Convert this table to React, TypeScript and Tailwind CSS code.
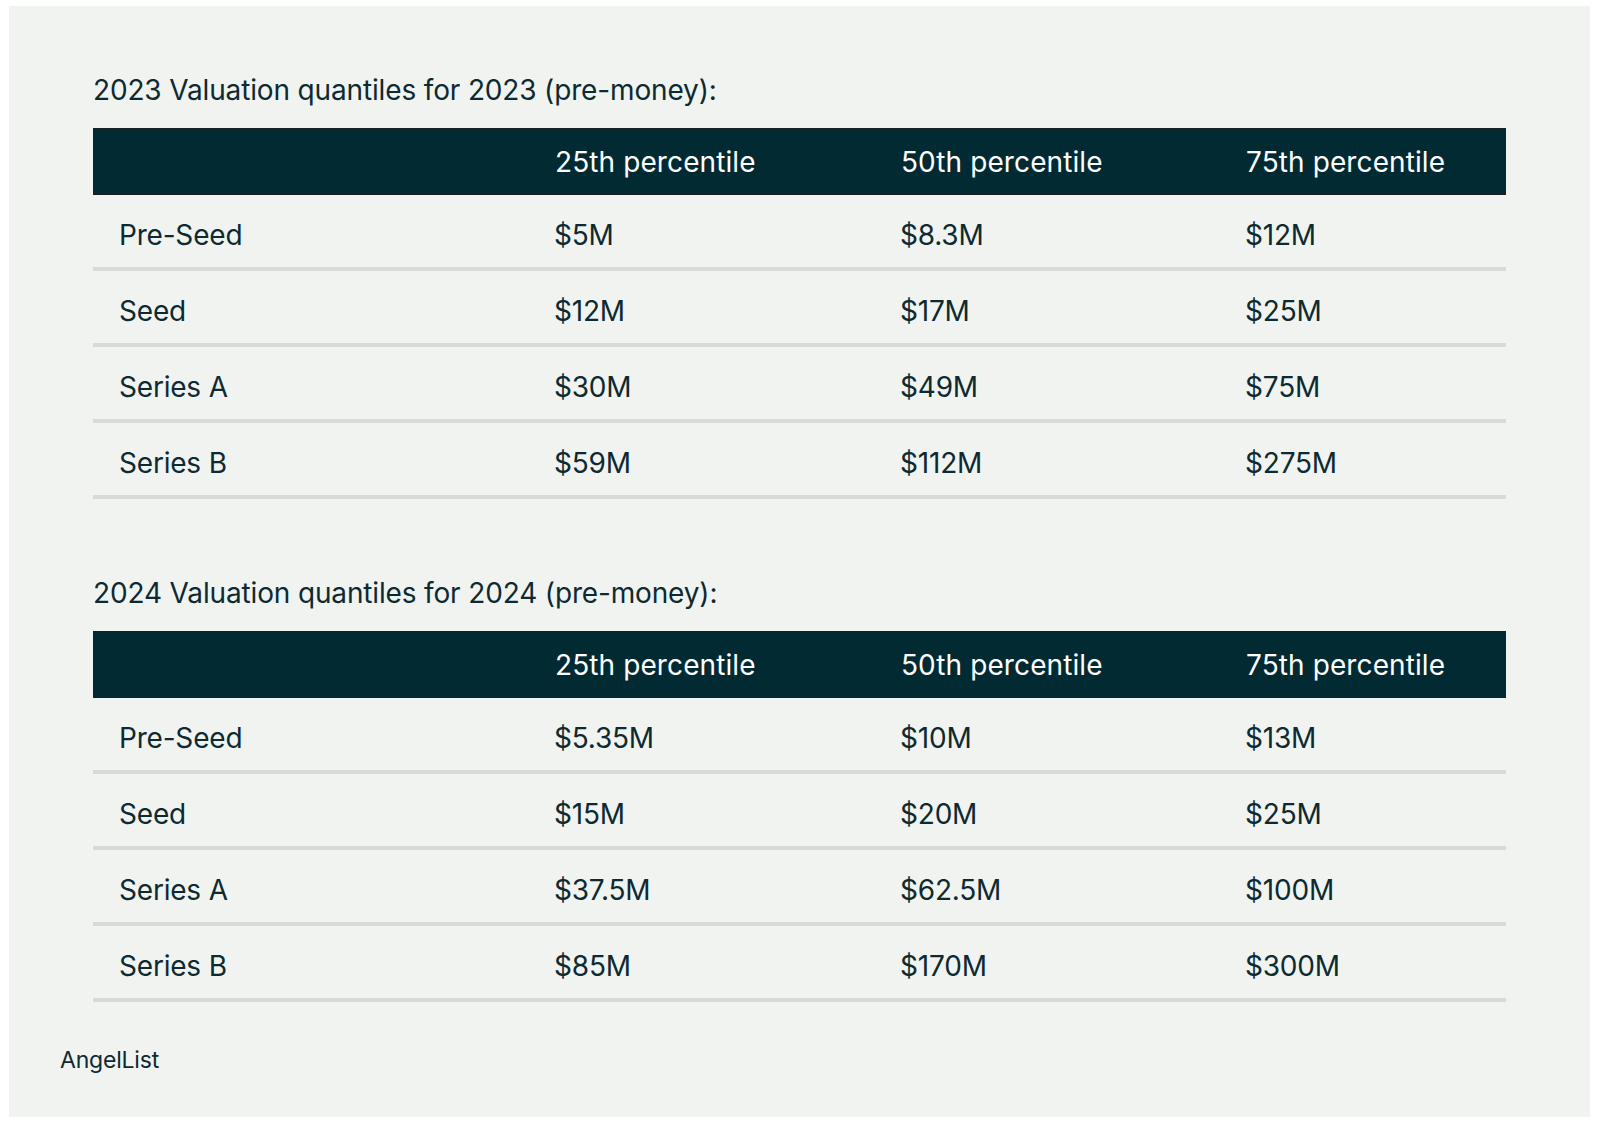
const tables = [
  {
    title: '2023 Valuation quantiles for 2023 (pre-money):',
    rows: [
      ['Pre-Seed', '$5M', '$8.3M', '$12M'],
      ['Seed', '$12M', '$17M', '$25M'],
      ['Series A', '$30M', '$49M', '$75M'],
      ['Series B', '$59M', '$112M', '$275M'],
    ],
  },
  {
    title: '2024 Valuation quantiles for 2024 (pre-money):',
    rows: [
      ['Pre-Seed', '$5.35M', '$10M', '$13M'],
      ['Seed', '$15M', '$20M', '$25M'],
      ['Series A', '$37.5M', '$62.5M', '$100M'],
      ['Series B', '$85M', '$170M', '$300M'],
    ],
  },
]

const headers = ['25th percentile', '50th percentile', '75th percentile']
const grid = 'grid grid-cols-[435px_346px_345px_1fr]'

function ValuationTable({ title, rows }: { title: string; rows: string[][] }) {
  return (
    <section>
      <h2 className="text-[28px] leading-[36px] text-[#0d2a31] tracking-[-0.15px]">{title}</h2>
      <div className="mt-[20px]">
        <div className={`${grid} h-[67px] items-center bg-[#022a32] border border-[#1a1f20] text-[28px] text-white`}>
          <div />
          {headers.map((h) => (
            <div key={h} className="pl-[26px] tracking-[0.1px]">{h}</div>
          ))}
        </div>
        {rows.map((row) => (
          <div
            key={row[0]}
            className={`${grid} h-[76px] pt-[8px] items-center border-b-4 border-[#d8dad8] text-[28px] text-[#0d2a31]`}
          >
            {row.map((cell, i) => (
              <div key={i} className="pl-[26px] tracking-[-0.2px]">{cell}</div>
            ))}
          </div>
        ))}
      </div>
    </section>
  )
}

export default function App() {
  return (
    <div className="min-h-screen bg-white pt-[6px] pl-[9px] pr-[10px] pb-[19px]" style={{ fontFamily: 'Inter, "Liberation Sans", sans-serif' }}>
      <div className="bg-[#f1f3f1] h-[1111px] pt-[66px]">
        <div className="px-[84px] flex flex-col gap-[76px]">
          {tables.map((t) => (
            <ValuationTable key={t.title} title={t.title} rows={t.rows} />
          ))}
        </div>
        <p className="mt-[41px] pl-[51px] text-[23px] text-[#0d2a31] tracking-[-0.2px]">AngelList</p>
      </div>
    </div>
  )
}
